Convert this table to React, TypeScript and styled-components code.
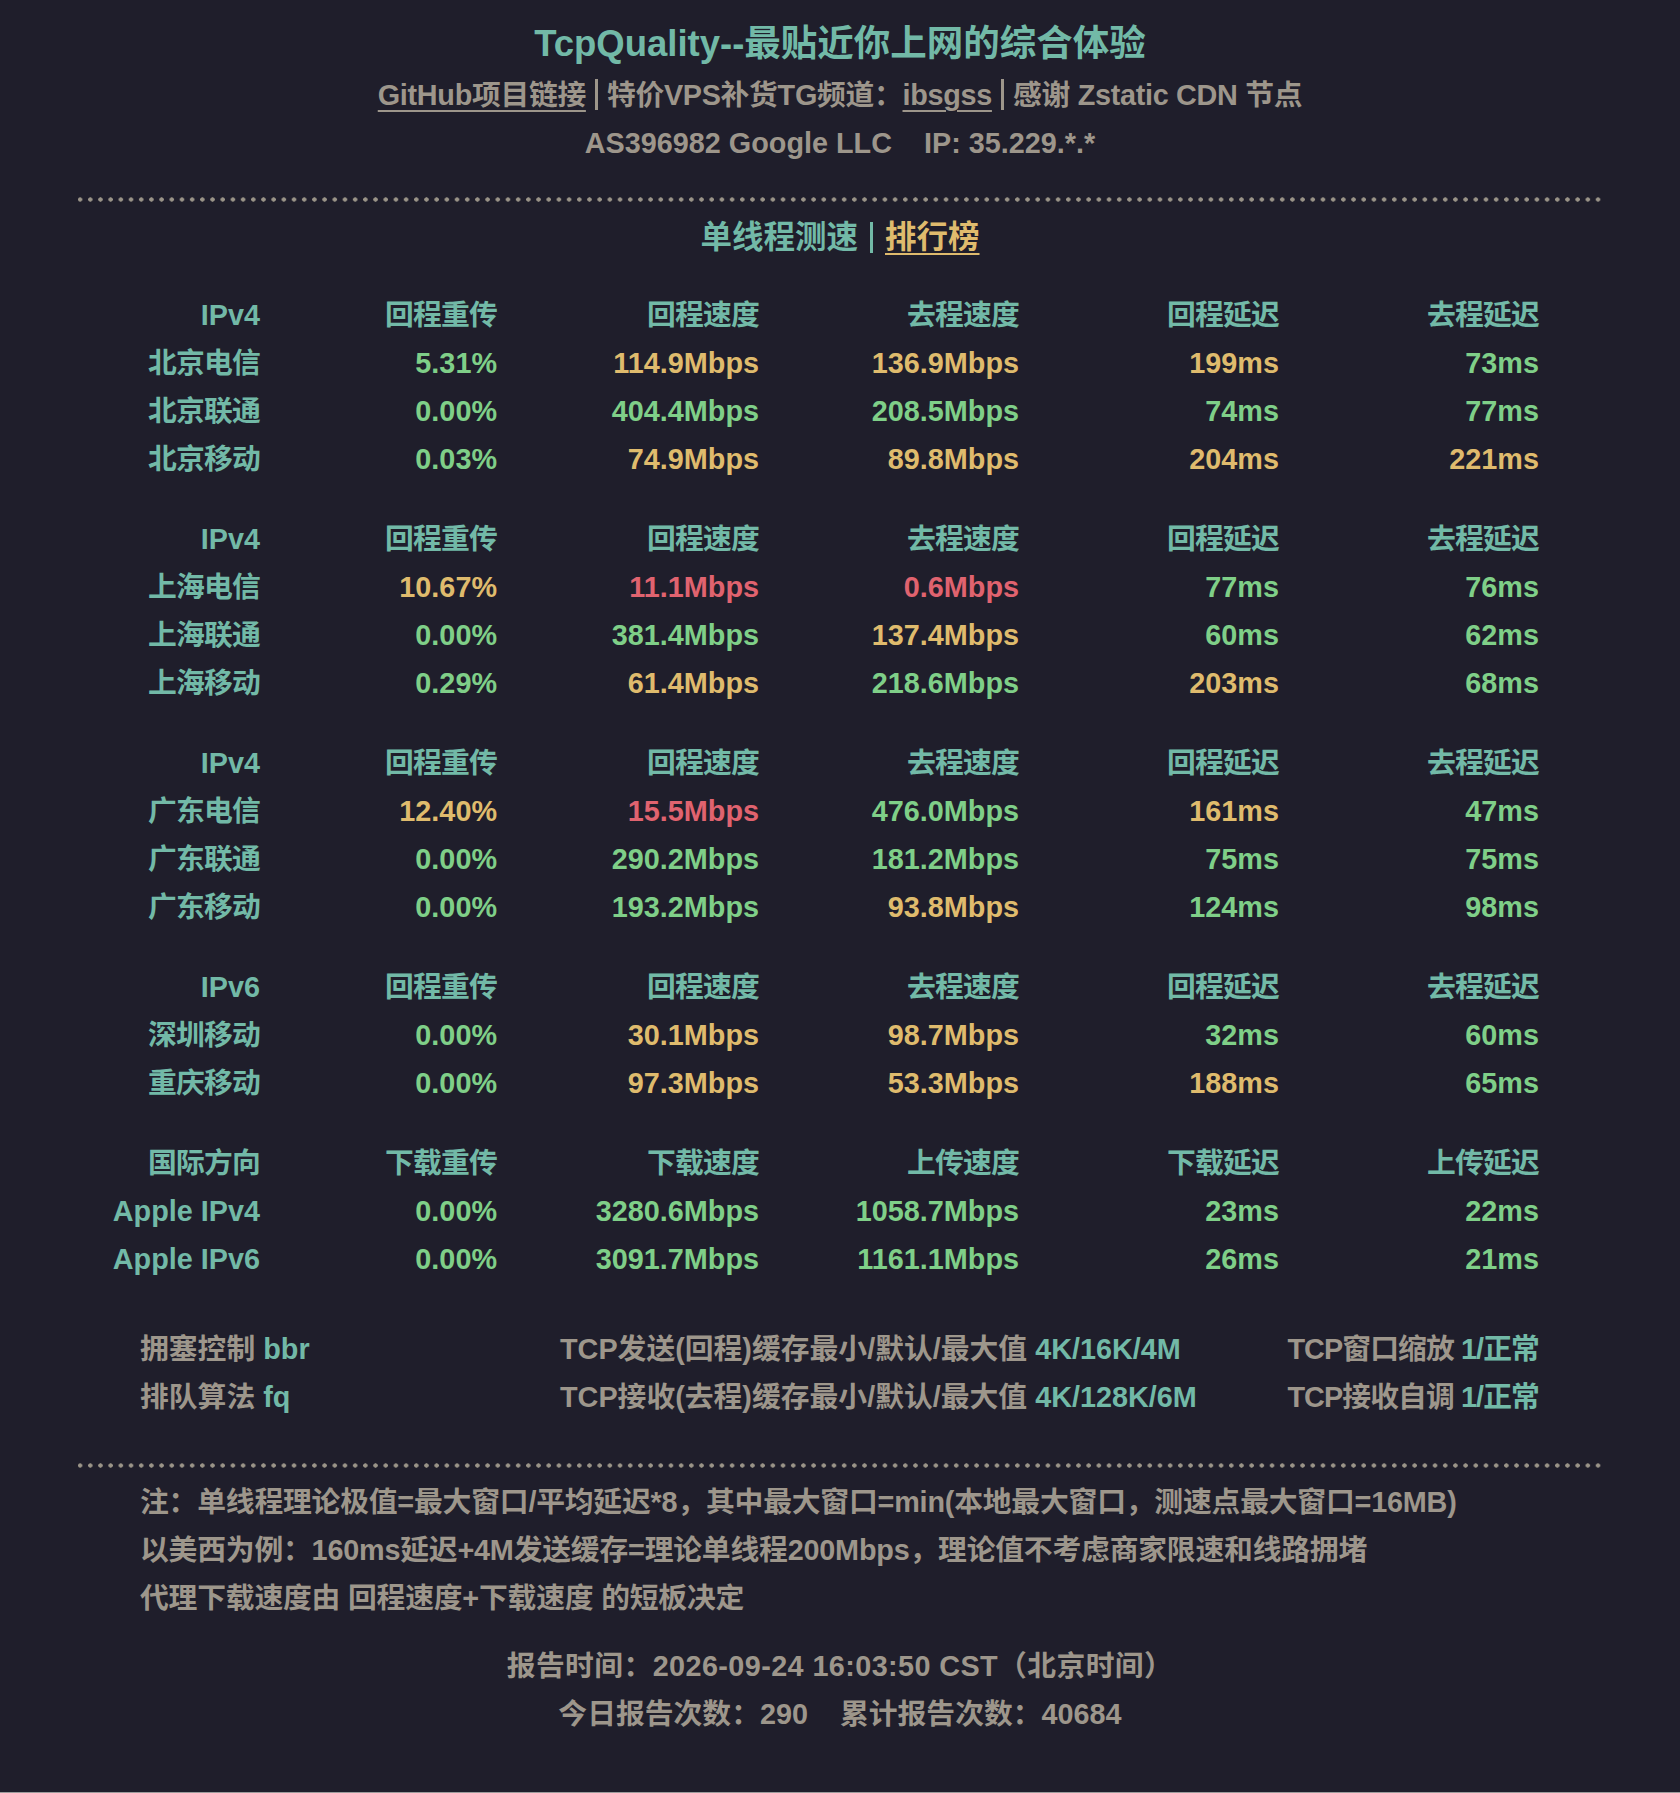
import React from "react";
import styled, { createGlobalStyle } from "styled-components";

const C = {
  bg: "#1f1e2b",
  teal: "#72b9a7",
  green: "#7fcf88",
  yellow: "#dfbb6d",
  red: "#e0636f",
  gray: "#9d968b",
};

const Global = createGlobalStyle`
  html, body { margin: 0; padding: 0; background: ${C.bg}; }
  body {
    font-family: "Liberation Sans", "Noto Sans CJK SC", sans-serif;
    font-weight: 700;
    -webkit-font-smoothing: antialiased;
  }
`;

const Page = styled.div`
  box-sizing: border-box;
  min-height: 1793px;
  border-bottom: 1px solid #9c9c9c;
  padding-top: 19px;
  background: ${C.bg};
  color: ${C.gray};
`;

const Title = styled.h1`
  margin: 0;
  text-align: center;
  font-size: 36.5px;
  line-height: 50px;
  color: ${C.teal};
  font-weight: 700;
`;

const SubLine = styled.div<{ $lh: number; $ls?: number }>`
  text-align: center;
  font-size: 28.8px;
  line-height: ${(p) => p.$lh}px;
  letter-spacing: ${(p) => p.$ls || 0}px;
  color: ${C.gray};
`;

const Link = styled.a<{ $color?: string }>`
  color: ${(p) => p.$color || C.gray};
  text-decoration: underline;
  text-decoration-thickness: 2px;
  text-underline-offset: 5px;
`;

const Bar = styled.span<{ $color?: string; $gap: number }>`
  display: inline-block;
  width: 3px;
  height: 31px;
  margin: 0 ${(p) => p.$gap}px;
  vertical-align: -5px;
  background: ${(p) => p.$color || C.gray};
`;

const Divider = styled.div<{ $mt: number }>`
  height: 5px;
  margin: ${(p) => p.$mt}px 78px 0;
  background-image: radial-gradient(circle at center, #9a9488 1.9px, transparent 2.4px);
  background-size: 10.2px 5px;
  background-repeat: repeat-x;
  background-position: -3px 0;
`;

const Heading = styled.div`
  margin-top: 11px;
  text-align: center;
  font-size: 31.5px;
  line-height: 48px;
  color: ${C.teal};
`;

const Table = styled.div`
  margin-top: 30px;
  display: flex;
  flex-direction: column;
  gap: 32px;
`;

const Group = styled.div`
  display: grid;
  grid-template-columns: 260px 237px 262px 260px 260px 260px;
  grid-auto-rows: 48px;
  font-size: 28.8px;
  line-height: 48px;
`;

const Cell = styled.div<{ $color: string; $cjk?: boolean }>`
  text-align: right;
  white-space: nowrap;
  color: ${(p) => p.$color};
  letter-spacing: ${(p) => (p.$cjk ? "-0.8px" : "0")};
`;

const Info = styled.div`
  margin-top: 42px;
  padding: 0 141px 0 140px;
  display: grid;
  grid-template-columns: 420px 1fr auto;
  grid-auto-rows: 48px;
  font-size: 28.8px;
  line-height: 48px;
  color: ${C.gray};
  white-space: nowrap;
`;

const InfoItem = styled.div<{ $end?: boolean }>`
  text-align: ${(p) => (p.$end ? "right" : "left")};
  letter-spacing: ${(p) => (p.$end ? "-0.9px" : "0")};
`;

const Val = styled.span`
  color: ${C.teal};
`;

const Notes = styled.div`
  margin-top: 10px;
  padding-left: 140px;
  font-size: 28.8px;
  line-height: 48px;
  letter-spacing: -0.2px;
  color: ${C.gray};
`;

const Report = styled.div`
  margin-top: 20px;
  text-align: center;
  font-size: 28.8px;
  line-height: 48px;
  color: ${C.gray};
`;

const ReportLine = styled.div<{ $ls: number }>`
  letter-spacing: ${(p) => p.$ls}px;
`;

type Tone = "g" | "y" | "r";
const toneColor = (t: Tone) => (t === "g" ? C.green : t === "y" ? C.yellow : C.red);

type Row = [string, ...[string, Tone][]];
interface GroupData {
  head: string[];
  rows: Row[];
}

const isCjk = (s: string) => /[\u4e00-\u9fff]/.test(s) && !/[A-Za-z]/.test(s);

const groups: GroupData[] = [
  {
    head: ["IPv4", "回程重传", "回程速度", "去程速度", "回程延迟", "去程延迟"],
    rows: [
      ["北京电信", ["5.31%", "g"], ["114.9Mbps", "y"], ["136.9Mbps", "y"], ["199ms", "y"], ["73ms", "g"]],
      ["北京联通", ["0.00%", "g"], ["404.4Mbps", "g"], ["208.5Mbps", "g"], ["74ms", "g"], ["77ms", "g"]],
      ["北京移动", ["0.03%", "g"], ["74.9Mbps", "y"], ["89.8Mbps", "y"], ["204ms", "y"], ["221ms", "y"]],
    ],
  },
  {
    head: ["IPv4", "回程重传", "回程速度", "去程速度", "回程延迟", "去程延迟"],
    rows: [
      ["上海电信", ["10.67%", "y"], ["11.1Mbps", "r"], ["0.6Mbps", "r"], ["77ms", "g"], ["76ms", "g"]],
      ["上海联通", ["0.00%", "g"], ["381.4Mbps", "g"], ["137.4Mbps", "y"], ["60ms", "g"], ["62ms", "g"]],
      ["上海移动", ["0.29%", "g"], ["61.4Mbps", "y"], ["218.6Mbps", "g"], ["203ms", "y"], ["68ms", "g"]],
    ],
  },
  {
    head: ["IPv4", "回程重传", "回程速度", "去程速度", "回程延迟", "去程延迟"],
    rows: [
      ["广东电信", ["12.40%", "y"], ["15.5Mbps", "r"], ["476.0Mbps", "g"], ["161ms", "y"], ["47ms", "g"]],
      ["广东联通", ["0.00%", "g"], ["290.2Mbps", "g"], ["181.2Mbps", "g"], ["75ms", "g"], ["75ms", "g"]],
      ["广东移动", ["0.00%", "g"], ["193.2Mbps", "g"], ["93.8Mbps", "y"], ["124ms", "g"], ["98ms", "g"]],
    ],
  },
  {
    head: ["IPv6", "回程重传", "回程速度", "去程速度", "回程延迟", "去程延迟"],
    rows: [
      ["深圳移动", ["0.00%", "g"], ["30.1Mbps", "y"], ["98.7Mbps", "y"], ["32ms", "g"], ["60ms", "g"]],
      ["重庆移动", ["0.00%", "g"], ["97.3Mbps", "y"], ["53.3Mbps", "y"], ["188ms", "y"], ["65ms", "g"]],
    ],
  },
  {
    head: ["国际方向", "下载重传", "下载速度", "上传速度", "下载延迟", "上传延迟"],
    rows: [
      ["Apple IPv4", ["0.00%", "g"], ["3280.6Mbps", "g"], ["1058.7Mbps", "g"], ["23ms", "g"], ["22ms", "g"]],
      ["Apple IPv6", ["0.00%", "g"], ["3091.7Mbps", "g"], ["1161.1Mbps", "g"], ["26ms", "g"], ["21ms", "g"]],
    ],
  },
];

export default function App() {
  return (
    <>
      <Global />
      <Page>
        <Title>TcpQuality--最贴近你上网的综合体验</Title>
        <SubLine $lh={52} $ls={-0.3}>
          <Link href="#">GitHub项目链接</Link>
          <Bar $gap={9} />
          特价VPS补货TG频道：<Link href="#">ibsgss</Link>
          <Bar $gap={9} />
          感谢 Zstatic CDN 节点
        </SubLine>
        <SubLine $lh={44}>AS396982 Google LLC&nbsp;&nbsp;&nbsp; IP: 35.229.*.*</SubLine>

        <Divider $mt={32} />

        <Heading>
          单线程测速
          <Bar $color={C.teal} $gap={12} />
          <Link href="#" $color={C.yellow}>排行榜</Link>
        </Heading>

        <Table>
          {groups.map((g, gi) => (
            <Group key={gi}>
              {g.head.map((h, i) => (
                <Cell key={"h" + i} $color={C.teal} $cjk={isCjk(h)}>{h}</Cell>
              ))}
              {g.rows.map((r, ri) => (
                <React.Fragment key={ri}>
                  <Cell $color={C.teal} $cjk={isCjk(r[0] as string)}>{r[0] as string}</Cell>
                  {(r.slice(1) as [string, Tone][]).map(([v, t], ci) => (
                    <Cell key={ci} $color={toneColor(t)}>{v}</Cell>
                  ))}
                </React.Fragment>
              ))}
            </Group>
          ))}
        </Table>

        <Info>
          <InfoItem>拥塞控制 <Val>bbr</Val></InfoItem>
          <InfoItem>TCP发送(回程)缓存最小/默认/最大值 <Val>4K/16K/4M</Val></InfoItem>
          <InfoItem $end>TCP窗口缩放 <Val>1/正常</Val></InfoItem>
          <InfoItem>排队算法 <Val>fq</Val></InfoItem>
          <InfoItem>TCP接收(去程)缓存最小/默认/最大值 <Val>4K/128K/6M</Val></InfoItem>
          <InfoItem $end>TCP接收自调 <Val>1/正常</Val></InfoItem>
        </Info>

        <Divider $mt={42} />

        <Notes>
          <div>注：单线程理论极值=最大窗口/平均延迟*8，其中最大窗口=min(本地最大窗口，测速点最大窗口=16MB)</div>
          <div>以美西为例：160ms延迟+4M发送缓存=理论单线程200Mbps，理论值不考虑商家限速和线路拥堵</div>
          <div>代理下载速度由 回程速度+下载速度 的短板决定</div>
        </Notes>

        <Report>
          <ReportLine $ls={0.4}>报告时间：2026-09-24 16:03:50 CST（北京时间）</ReportLine>
          <ReportLine $ls={0}>今日报告次数：290&nbsp;&nbsp;&nbsp; 累计报告次数：40684</ReportLine>
        </Report>
      </Page>
    </>
  );
}
